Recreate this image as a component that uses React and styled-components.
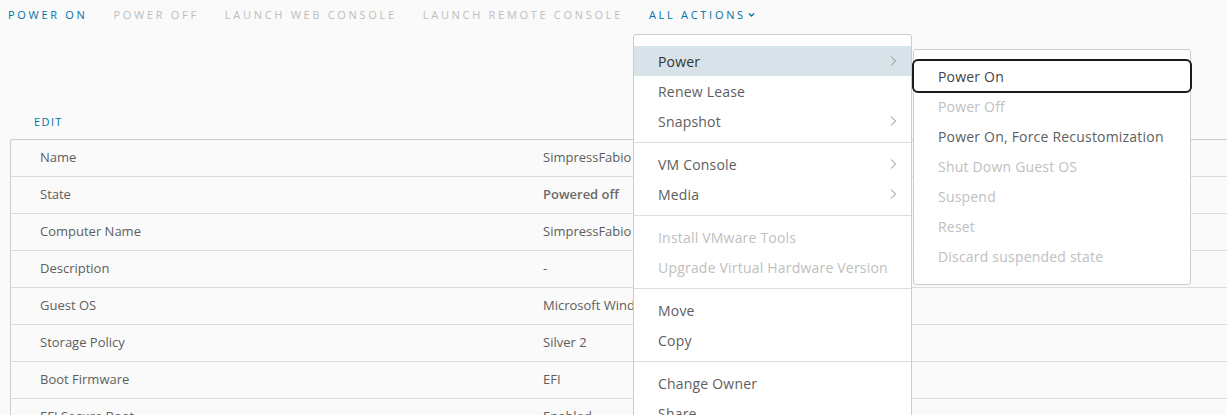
import React from "react";
import styled, { createGlobalStyle, css } from "styled-components";

const GlobalStyle = createGlobalStyle`
  html, body {
    margin: 0;
    padding: 0;
    background: #fafafa;
    overflow: hidden;
  }
  body {
    font-family: "Open Sans", "Liberation Sans", sans-serif;
    color: #565656;
  }
`;

const Page = styled.div`
  position: relative;
  width: 1227px;
  height: 415px;
  overflow: hidden;
  background: #fafafa;
`;

const Toolbar = styled.nav`
  display: flex;
  align-items: center;
  height: 29px;
  padding-left: 8px;
  gap: 26px;
`;

const NavButton = styled.button`
  border: none;
  background: none;
  padding: 0;
  font-family: inherit;
  font-size: 11px;
  font-weight: 500;
  letter-spacing: 2.7px;
  text-transform: uppercase;
  color: ${(p) => (p.$disabled ? "#bdbdbd" : "#0072a3")};
  display: flex;
  align-items: center;
  gap: 2px;
`;

const Content = styled.div`
  padding: 77px 0 0 10px;
`;

const EditLink = styled.div`
  font-size: 11px;
  font-weight: 500;
  letter-spacing: 1.4px;
  color: #0072a3;
  padding-left: 24px;
  height: 33px;
  line-height: 31px;
`;

const Grid = styled.div`
  border: 1px solid #cccccc;
  border-right: none;
  border-radius: 3px 0 0 0;
  width: 1240px;
`;

const Row = styled.div`
  display: grid;
  grid-template-columns: 532px 1fr;
  height: 37px;
  padding-bottom: 2px;
  box-sizing: border-box;
  align-items: center;
  font-size: 13px;
  color: #5e5e5e;
  & + & {
    border-top: 1px solid #dddddd;
    height: 37px;
  }
  &:first-child {
    height: 36px;
  }
`;

const Label = styled.div`
  padding-left: 29px;
`;

const Value = styled.div`
  font-weight: ${(p) => (p.$bold ? 600 : 400)};
  color: ${(p) => (p.$bold ? "#6a6a6a" : "inherit")};
`;

const Menu = styled.div`
  position: absolute;
  left: 633px;
  top: 34px;
  width: 279px;
  background: #ffffff;
  border: 1px solid #cccccc;
  border-radius: 3px;
  padding: 12px 0;
  box-sizing: border-box;
`;

const SubMenu = styled(Menu)`
  left: 913px;
  top: 49px;
  width: 278px;
  height: 236px;
`;

const Item = styled.div`
  position: relative;
  display: flex;
  align-items: center;
  justify-content: space-between;
  height: 30px;
  margin-top: ${(p) => (p.$first ? "-1px" : "0")};
  padding: 0 14px 0 24px;
  font-size: 14px;
  letter-spacing: 0.2px;
  color: ${(p) => (p.$disabled ? "#c0c0c0" : "#5e5e5e")};
  ${(p) =>
    p.$active &&
    css`
      background: #d8e3e9;
      color: #333333;
    `}
  ${(p) =>
    p.$focused &&
    css`
      outline: 2px solid #1b1b1b;
      border-radius: 4px;
      color: #444444;
    `}
`;

const Divider = styled.div`
  height: 1px;
  background: #dddddd;
  margin: 6px 0;
`;

const Chevron = () => (
  <svg width="8" height="12" viewBox="0 0 8 12">
    <path d="M2 1.5 L6.5 6 L2 10.5" fill="none" stroke="#8c8c8c" strokeWidth="1" />
  </svg>
);

const Caret = () => (
  <svg width="7" height="6" viewBox="0 0 7 6">
    <path d="M1 1.5 L3.5 4 L6 1.5" fill="none" stroke="#0072a3" strokeWidth="1.3" />
  </svg>
);

const rows = [
  ["Name", "SimpressFabio"],
  ["State", "Powered off", true],
  ["Computer Name", "SimpressFabio"],
  ["Description", "-"],
  ["Guest OS", "Microsoft Windows"],
  ["Storage Policy", "Silver 2"],
  ["Boot Firmware", "EFI"],
  ["EFI Secure Boot", "Enabled"],
];

const menuGroups = [
  [
    { label: "Power", sub: true, active: true },
    { label: "Renew Lease" },
    { label: "Snapshot", sub: true },
  ],
  [
    { label: "VM Console", sub: true },
    { label: "Media", sub: true },
  ],
  [
    { label: "Install VMware Tools", disabled: true },
    { label: "Upgrade Virtual Hardware Version", disabled: true },
  ],
  [{ label: "Move" }, { label: "Copy" }],
  [{ label: "Change Owner" }, { label: "Share" }],
];

const powerItems = [
  { label: "Power On", focused: true },
  { label: "Power Off", disabled: true },
  { label: "Power On, Force Recustomization" },
  { label: "Shut Down Guest OS", disabled: true },
  { label: "Suspend", disabled: true },
  { label: "Reset", disabled: true },
  { label: "Discard suspended state", disabled: true },
];

export default function App() {
  return (
    <Page>
      <GlobalStyle />
      <Toolbar>
        <NavButton>Power On</NavButton>
        <NavButton $disabled>Power Off</NavButton>
        <NavButton $disabled>Launch Web Console</NavButton>
        <NavButton $disabled>Launch Remote Console</NavButton>
        <NavButton>
          All Actions
          <Caret />
        </NavButton>
      </Toolbar>

      <Content>
        <EditLink>EDIT</EditLink>
        <Grid>
          {rows.map(([k, v, bold]) => (
            <Row key={k}>
              <Label>{k}</Label>
              <Value $bold={bold}>{v}</Value>
            </Row>
          ))}
        </Grid>
      </Content>

      <Menu>
        {menuGroups.map((group, gi) => (
          <React.Fragment key={gi}>
            {gi > 0 && <Divider />}
            {group.map((it, ii) => (
              <Item
                key={it.label}
                $first={gi === 0 && ii === 0}
                $active={it.active}
                $disabled={it.disabled}
              >
                {it.label}
                {it.sub && <Chevron />}
              </Item>
            ))}
          </React.Fragment>
        ))}
      </Menu>

      <SubMenu>
        {powerItems.map((it, ii) => (
          <Item
            key={it.label}
            $first={ii === 0}
            $focused={it.focused}
            $disabled={it.disabled}
          >
            {it.label}
          </Item>
        ))}
      </SubMenu>
    </Page>
  );
}
